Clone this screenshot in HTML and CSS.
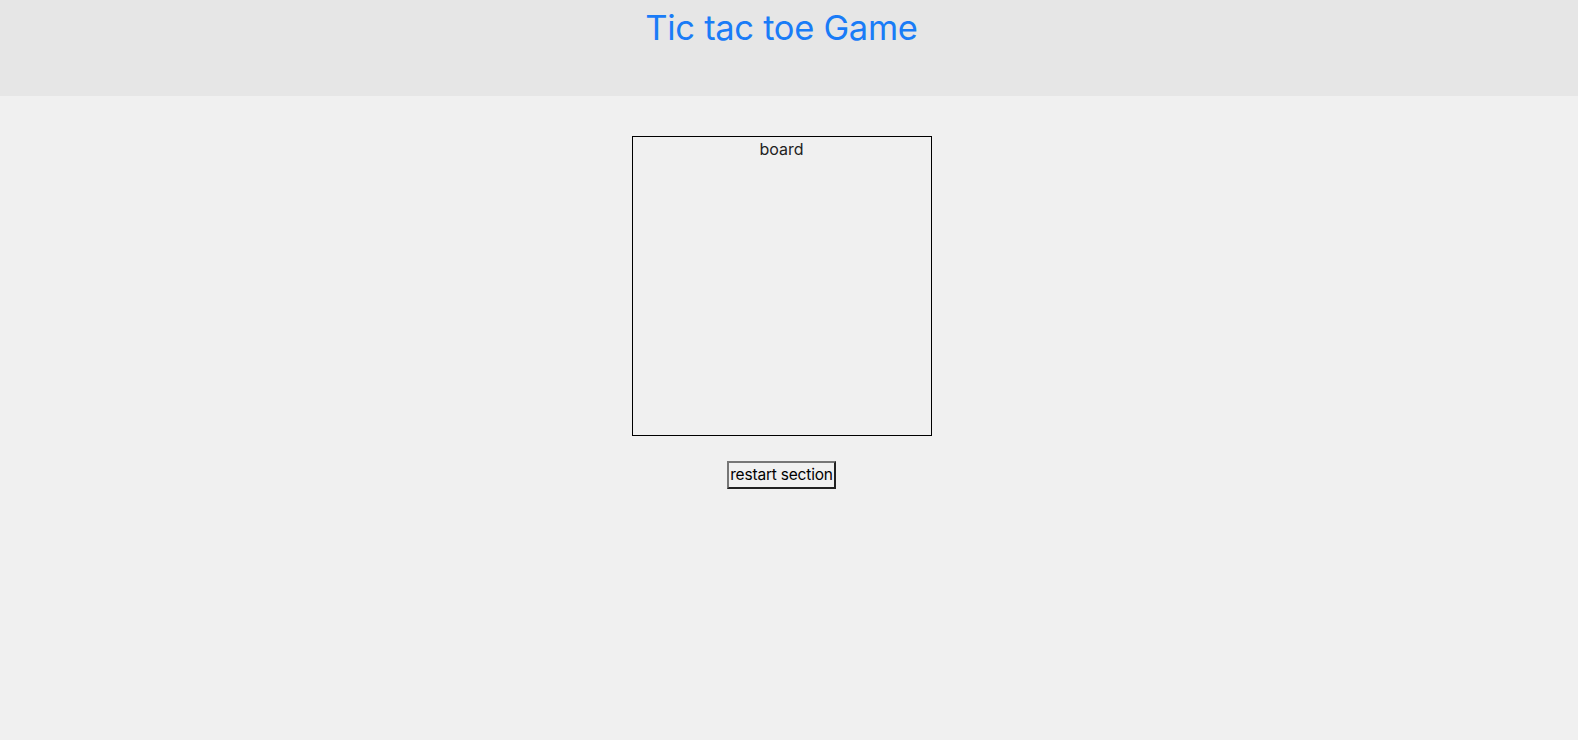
FILE: index.html
```html
<!DOCTYPE html>
<html lang="en">
<head>
<meta charset="UTF-8">
<meta name="viewport" content="width=device-width, initial-scale=1.0">
<title>Tic tac toe Game</title>
<link rel="stylesheet" href="styles.css">
</head>
<body>

<header class="header">
    <h1 class="title">Tic tac toe Game</h1>
</header>

<main class="game">
    <div class="board">board</div>
    <button class="restart">restart section</button>
</main>

</body>
</html>
```

FILE: styles.css
```css
body {
    margin: 0;
    background-color: #f0f0f0;
    font-family: Inter, "Liberation Sans", sans-serif;
    color: #222;
}

.header {
    height: 96px;
    background-color: #e6e6e6;
    text-align: center;
    padding-right: 15px;
}

.title {
    margin: 0;
    padding-top: 7px;
    font-size: 34.5px;
    font-weight: 400;
    letter-spacing: -0.3px;
    color: #1a7cf7;
}

.game {
    display: flex;
    flex-direction: column;
    align-items: center;
    padding-top: 40px;
    padding-right: 15px;
}

.board {
    width: 298px;
    height: 296px;
    border: 1px solid #000;
    text-align: center;
    font-size: 16px;
    padding-top: 2px;
}

.restart {
    margin-top: 25px;
    font-family: Inter, "Liberation Sans", sans-serif;
    font-size: 15.5px;
    letter-spacing: -0.2px;
    color: #000;
    background-color: #f0f0f0;
    border: 2px outset #767676;
    padding: 2px 1px 3px;
}
```
